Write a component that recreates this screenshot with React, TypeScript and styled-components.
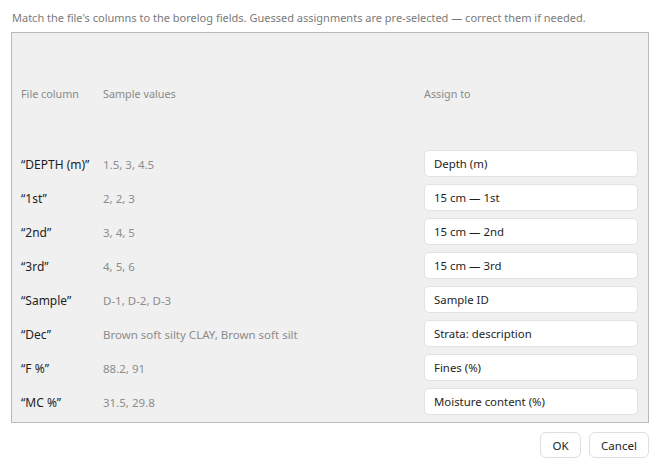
import React from "react";
import styled, { createGlobalStyle } from "styled-components";

const Global = createGlobalStyle`
  html, body { margin: 0; padding: 0; background: #ffffff; }
  body { font-family: "Segoe UI", "Noto Sans", "Open Sans", sans-serif; }
  * { box-sizing: border-box; }
`;

const Page = styled.div`
  width: 660px;
  height: 470px;
  padding: 9px 12px 0 11px;
  display: flex;
  flex-direction: column;
`;

const Intro = styled.p`
  margin: 0 0 6px 1px;
  font-size: 11px;
  line-height: 17px;
  color: #7a7a7a;
`;

const Panel = styled.div`
  width: 638px;
  border: 1px solid #b9b9b9;
  background: #f0f0f0;
  padding: 0 10px 3px 9px;
`;

const Grid = styled.div`
  display: grid;
  grid-template-columns: 82px 1fr 214px;
`;

const HeadCell = styled.div`
  height: 114px;
  padding-top: 6px;
  display: flex;
  align-items: center;
  font-size: 10.8px;
  color: #8a8a8a;
`;

const Cell = styled.div`
  height: 34px;
  display: flex;
  align-items: center;
`;

const NameCell = styled(Cell)`
  font-size: 12px;
  color: #1e1e1e;
`;

const SampleCell = styled(Cell)`
  font-size: 11.5px;
  color: #8c8c8c;
`;

const AssignCell = styled(Cell)`
  padding: 3px 0 4px;
`;

const Select = styled.div`
  width: 100%;
  height: 27px;
  background: #ffffff;
  border: 1px solid #e4e2dc;
  border-radius: 5px;
  padding: 0 9px;
  display: flex;
  align-items: center;
  font-size: 11.4px;
  color: #1e1e1e;
`;

const Footer = styled.div`
  display: flex;
  justify-content: flex-end;
  gap: 8px;
  margin-top: 9px;
  width: 638px;
`;

const Button = styled.button<{ $w: number }>`
  width: ${(p) => p.$w}px;
  height: 26px;
  background: #ffffff;
  border: 1px solid #e2dfd8;
  border-radius: 6px;
  font-family: inherit;
  font-size: 11.5px;
  color: #1e1e1e;
  padding: 0;
`;

const rows = [
  { name: "DEPTH (m)", sample: "1.5, 3, 4.5", assign: "Depth (m)" },
  { name: "1st", sample: "2, 2, 3", assign: "15 cm \u2014 1st" },
  { name: "2nd", sample: "3, 4, 5", assign: "15 cm \u2014 2nd" },
  { name: "3rd", sample: "4, 5, 6", assign: "15 cm \u2014 3rd" },
  { name: "Sample", sample: "D-1, D-2, D-3", assign: "Sample ID" },
  { name: "Dec", sample: "Brown soft silty CLAY, Brown soft silt", assign: "Strata: description" },
  { name: "F %", sample: "88.2, 91", assign: "Fines (%)" },
  { name: "MC %", sample: "31.5, 29.8", assign: "Moisture content (%)" },
];

export default function App() {
  return (
    <>
      <Global />
      <Page>
        <Intro>
          Match the file's columns to the borelog fields. Guessed assignments are pre-selected — correct them if needed.
        </Intro>
        <Panel>
          <Grid>
            <HeadCell>File column</HeadCell>
            <HeadCell>Sample values</HeadCell>
            <HeadCell>Assign to</HeadCell>
            {rows.map((r) => (
              <React.Fragment key={r.name}>
                <NameCell>{"\u201C" + r.name + "\u201D"}</NameCell>
                <SampleCell>{r.sample}</SampleCell>
                <AssignCell>
                  <Select>{r.assign}</Select>
                </AssignCell>
              </React.Fragment>
            ))}
          </Grid>
        </Panel>
        <Footer>
          <Button $w={41}>OK</Button>
          <Button $w={60}>Cancel</Button>
        </Footer>
      </Page>
    </>
  );
}
